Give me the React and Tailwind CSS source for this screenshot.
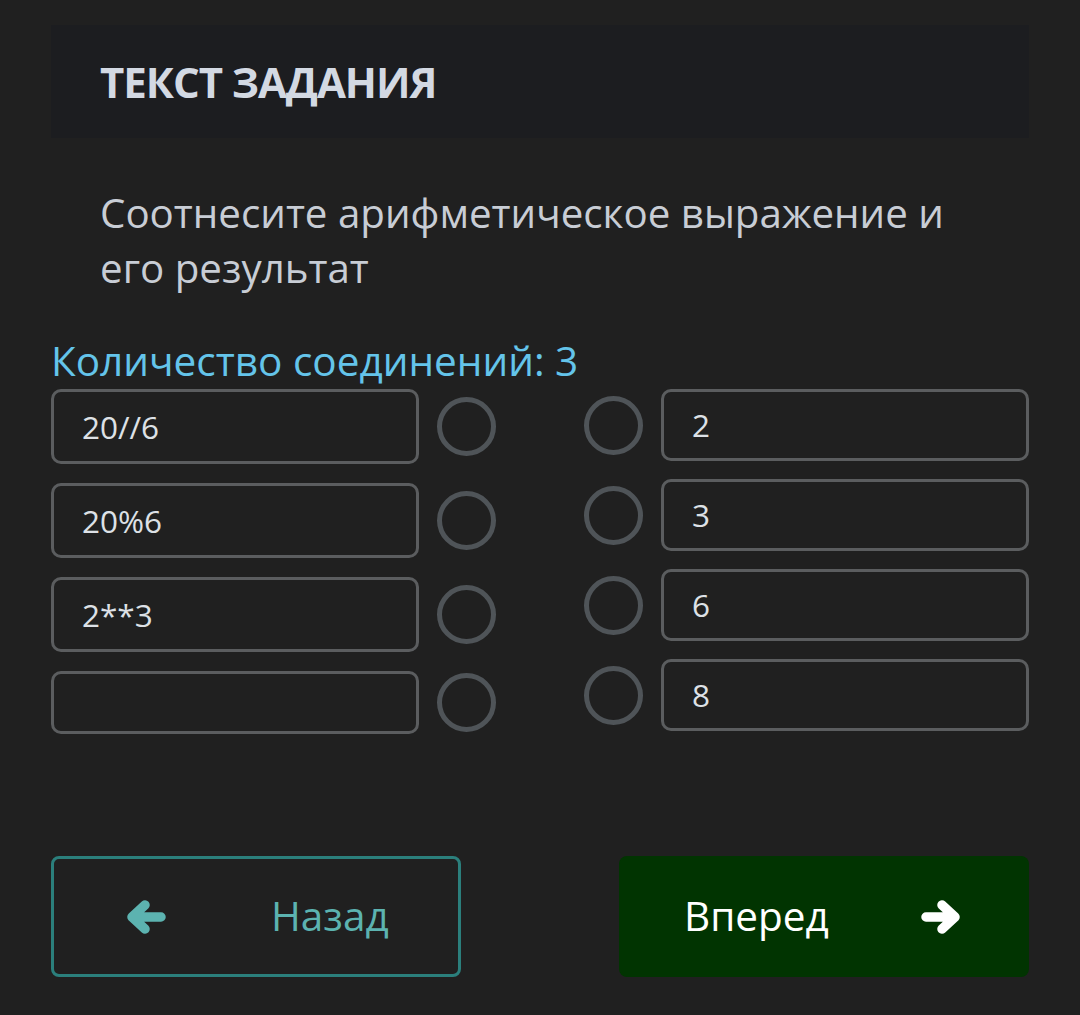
const LEFT = ["20//6", "20%6", "2**3", ""];
const RIGHT = ["2", "3", "6", "8"];

function Circle() {
  return <div className="w-[59px] h-[59px] rounded-full border-[5px] border-[#4f5458] shrink-0" />;
}

function Arrow({ flip, className }) {
  return (
    <svg width="40" height="34" viewBox="0 0 40 34" className={`shrink-0 ${flip ? 'scale-x-[-1]' : ''} ${className || ''}`}>
      <path d="M19 5 L6 17 L19 29 M6 17 H35" fill="none" stroke="currentColor" strokeWidth="9.5" strokeLinecap="round" strokeLinejoin="round" />
    </svg>
  );
}

export default function App() {
  return (
    <div className="w-full h-[1015px] bg-[#202020] font-['Open_Sans',sans-serif] px-[51px] pt-[25px]">
      <div className="bg-[#1c1d20] h-[113px] flex items-center pl-[49px]">
        <h1 className="text-[42px] font-bold text-[#d3d9e3] tracking-tight">ТЕКСТ ЗАДАНИЯ</h1>
      </div>

      <p className="mt-[47px] pl-[49px] pr-[50px] text-[40.3px] leading-[55px] text-[#c8cdd5]">
        Соотнесите арифметическое выражение и его результат
      </p>

      <div className="mt-[43px] text-[40.5px] leading-[46px] text-[#64c4ea]">Количество соединений: 3</div>

      <div className="flex justify-between mt-[5px]">
        <div className="flex flex-col gap-[19px] w-[445px]">
          {LEFT.map((t, i) => (
            <div key={i} className="flex items-center gap-[18px]">
              <div className={`w-[368px] ${i === 3 ? 'h-[63px]' : 'h-[75px]'} border-[3px] border-[#5b5d5f] rounded-[10px] flex items-center pl-[28px] text-[31.5px] text-[#dde1e6]`}>
                {t}
              </div>
              <Circle />
            </div>
          ))}
        </div>
        <div className="flex flex-col gap-[18px] w-[445px]">
          {RIGHT.map((t, i) => (
            <div key={i} className="flex items-center gap-[18px]">
              <Circle />
              <div className="w-[368px] h-[72px] border-[3px] border-[#5b5d5f] rounded-[10px] flex items-center pl-[28px] text-[31.5px] text-[#dde1e6]">
                {t}
              </div>
            </div>
          ))}
        </div>
      </div>

      <div className="flex justify-between mt-[122px]">
        <button className="w-[410px] h-[121px] border-[3px] border-[#2b7f7c] rounded-[8px] flex items-center pl-[72px] text-[40.5px] text-[#5cb3b0]">
          <Arrow className="text-[#5cb3b0]" />
          <span className="ml-[105px]">Назад</span>
        </button>
        <button className="w-[410px] h-[121px] bg-[#013401] rounded-[8px] flex items-center pl-[65px] text-[40.5px] text-white">
          <span>Вперед</span>
          <Arrow flip className="ml-[92px] text-white" />
        </button>
      </div>
    </div>
  );
}
